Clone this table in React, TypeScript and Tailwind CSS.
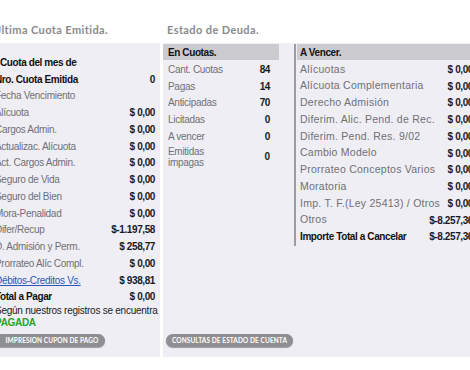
import React from "react";

const F = { fontFamily: '"Liberation Sans", Arial, sans-serif' } as const;
const T = { fontFamily: 'Lato, "Open Sans", sans-serif' } as const;

const LABEL_S = "text-[10px] tracking-[-0.3px] text-[#707076]";
const LABEL_L = "text-[10.5px] tracking-[0.25px] text-[#707076]";
const BOLD = "text-[10px] font-bold tracking-[-0.4px] text-[#111]";

function Row({ label, value, bold, big }: { label: React.ReactNode; value: string; bold?: boolean; big?: boolean }) {
  return (
    <div className="flex h-[16.75px] items-center justify-between">
      <span className={bold ? BOLD : big ? LABEL_L : LABEL_S}>{label}</span>
      <span className="text-[10px] font-bold tracking-[-0.4px] text-[#1a1a1a]">{value}</span>
    </div>
  );
}

function Pill({ children, w }: { children: React.ReactNode; w: string }) {
  return (
    <div
      className={`flex h-[13px] items-center justify-center rounded-full bg-[#8f8e93] text-[6.5px] font-bold tracking-[0.1px] text-white shadow-[0_1px_1px_rgba(0,0,0,0.35)] ${w}`}
      style={T}
    >
      {children}
    </div>
  );
}

export default function App() {
  const left: [string, string][] = [
    ["Alícuota", "$ 0,00"],
    ["Cargos Admin.", "$ 0,00"],
    ["Actualizac. Alícuota", "$ 0,00"],
    ["Act. Cargos Admin.", "$ 0,00"],
    ["Seguro de Vida", "$ 0,00"],
    ["Seguro del Bien", "$ 0,00"],
    ["Mora-Penalidad", "$ 0,00"],
    ["Difer/Recup", "$-1.197,58"],
    ["D. Admisión y Perm.", "$ 258,77"],
    ["Prorrateo Alíc Compl.", "$ 0,00"],
  ];
  const mid: [string, string][] = [
    ["Cant. Cuotas", "84"],
    ["Pagas", "14"],
    ["Anticipadas", "70"],
    ["Licitadas", "0"],
    ["A vencer", "0"],
  ];
  const right: [string, string][] = [
    ["Alícuotas", "$ 0,00"],
    ["Alícuota Complementaria", "$ 0,00"],
    ["Derecho Admisión", "$ 0,00"],
    ["Diferim. Alic. Pend. de Rec.", "$ 0,00"],
    ["Diferim. Pend. Res. 9/02", "$ 0,00"],
    ["Cambio Modelo", "$ 0,00"],
    ["Prorrateo Conceptos Varios", "$ 0,00"],
    ["Moratoria", "$ 0,00"],
    ["Imp. T. F.(Ley 25413) / Otros", "$ 0,00"],
    ["Otros", "$-8.257,36"],
  ];
  return (
    <div className="h-[370px] w-[470px] overflow-hidden bg-white text-[11px]" style={F}>
      <div className="ml-[-6px] flex w-[500px] gap-[3px]">
        {/* left column */}
        <div className="flex w-[166px] shrink-0 flex-col">
          <div className="ml-[-1px] flex h-[43px] items-end pb-[5px] text-[11px] font-bold tracking-[0.4px] text-[#8a8a8e]" style={T}>
            Ultima Cuota Emitida.
          </div>
          <div className="flex h-[314px] flex-col bg-[#efeef4] pl-[1px] pr-[5px] pt-[11px]">
            <div className={`flex h-[16.75px] items-center pl-[5px] ${BOLD}`}>Cuota del mes de</div>
            <Row label="Nro. Cuota Emitida" value="0" bold />
            <div className={`flex h-[16.75px] items-center ${LABEL_S}`}>Fecha Vencimiento</div>
            {left.map(([l, v]) => (
              <Row key={l} label={l} value={v} />
            ))}
            <div className="flex h-[16.75px] items-center justify-between">
              <span className="text-[10px] tracking-[-0.3px] text-[#2b55b8] underline">Débitos-Creditos Vs.</span>
              <span className="text-[10px] font-bold tracking-[-0.4px] text-[#1a1a1a]">$ 938,81</span>
            </div>
            <Row label="Total a Pagar" value="$ 0,00" bold />
            <div className="whitespace-nowrap text-[10px] leading-[12px] tracking-[-0.25px] text-[#222]">
              Según nuestros registros se encuentra
            </div>
            <div className="text-[10px] font-bold leading-[11px] tracking-[-0.3px] text-[#27a327]">PAGADA</div>
            <div className="mt-[6px]">
              <Pill w="w-[110px] pl-[4px]">IMPRESION CUPON DE PAGO</Pill>
            </div>
          </div>
        </div>
        {/* right column */}
        <div className="flex w-[330px] shrink-0 flex-col">
          <div className="flex h-[43px] items-end pb-[5px] pl-[4px] text-[11px] font-bold tracking-[0.4px] text-[#8a8a8e]" style={T}>
            Estado de Deuda.
          </div>
          <div className="flex h-[314px] flex-col bg-[#efeef4]">
            <div className="flex pt-[1px]">
              <div className="w-[116px] shrink-0">
                <div className={`flex h-[16px] items-center bg-[#cbcacf] pl-[5px] ${BOLD}`}>En Cuotas.</div>
                <div className="pl-[5px] pr-[9px] pt-[1px]">
                  {mid.map(([l, v]) => (
                    <Row key={l} label={l} value={v} />
                  ))}
                  <div className="mt-[1px] flex items-center justify-between leading-[11px]">
                    <span className={LABEL_S}>
                      Emitidas
                      <br />
                      impagas
                    </span>
                    <span className="text-[10px] font-bold text-[#1a1a1a]">0</span>
                  </div>
                </div>
              </div>
              <div className="ml-[15px] h-[202px] w-[2px] shrink-0 self-start bg-[#9d9ca2]" />
              <div className="ml-[1px] w-[180px] shrink-0">
                <div className={`flex h-[16px] items-center bg-[#cbcacf] pl-[3px] ${BOLD}`}>A Vencer.</div>
                <div className="pl-[3px] pr-[4px] pt-[1px]">
                  {right.map(([l, v]) => (
                    <Row key={l} label={l} value={v} big />
                  ))}
                  <Row label="Importe Total a Cancelar" value="$-8.257,36" bold />
                </div>
              </div>
            </div>
            <div className="mb-[10px] mt-auto pl-[3px]">
              <Pill w="w-[127px]">CONSULTAS DE ESTADO DE CUENTA</Pill>
            </div>
          </div>
        </div>
      </div>
    </div>
  );
}
